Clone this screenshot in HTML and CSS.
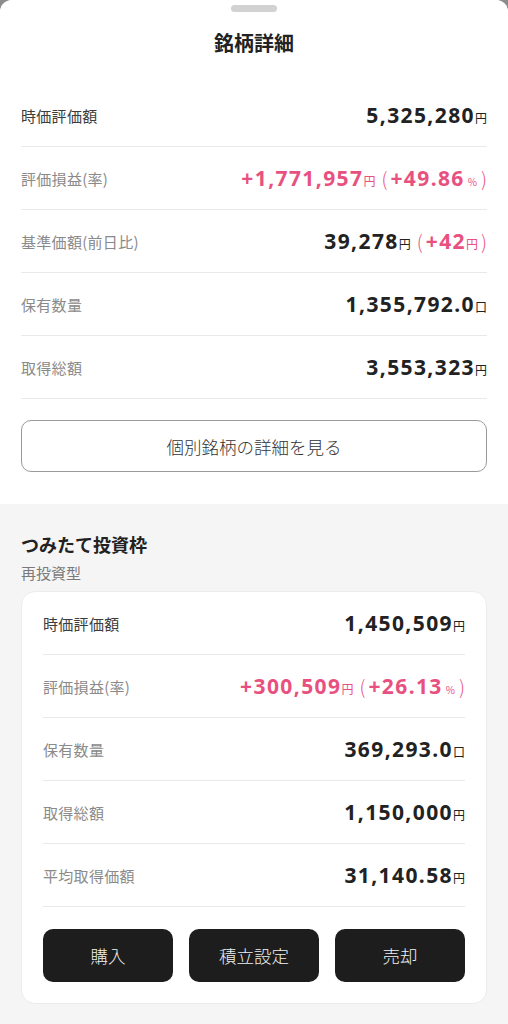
FILE: index.html
```html
<!DOCTYPE html>
<html lang="ja">
<head>
<meta charset="utf-8">
<link rel="stylesheet" href="styles.css">
</head>
<body>
<div class="sheet">
  <section class="top">
    <div class="handle"></div>
    <h1 class="title">銘柄詳細</h1>
    <div class="rows">
      <div class="row"><span class="label strong">時価評価額</span><span class="val"><b>5,325,280</b><small>円</small></span></div>
      <div class="row"><span class="label">評価損益(率)</span><span class="val pink"><b>+1,771,957</b><small>円</small><span class="par">(</span><b>+49.86</b><small class="pc">%</small><span class="par">)</span></span></div>
      <div class="row"><span class="label">基準価額(前日比)</span><span class="val"><b>39,278</b><small>円</small><span class="pink"><span class="par">(</span><b>+42</b><small>円</small><span class="par">)</span></span></span></div>
      <div class="row"><span class="label">保有数量</span><span class="val"><b>1,355,792.0</b><small>口</small></span></div>
      <div class="row"><span class="label">取得総額</span><span class="val"><b>3,553,323</b><small>円</small></span></div>
    </div>
    <button class="outline">個別銘柄の詳細を見る</button>
  </section>
  <section class="gray">
    <h2 class="sec-title">つみたて投資枠</h2>
    <p class="sec-sub">再投資型</p>
    <div class="card">
      <div class="rows">
        <div class="row"><span class="label strong">時価評価額</span><span class="val"><b>1,450,509</b><small>円</small></span></div>
        <div class="row"><span class="label">評価損益(率)</span><span class="val pink"><b>+300,509</b><small>円</small><span class="par">(</span><b>+26.13</b><small class="pc">%</small><span class="par">)</span></span></div>
        <div class="row"><span class="label">保有数量</span><span class="val"><b>369,293.0</b><small>口</small></span></div>
        <div class="row"><span class="label">取得総額</span><span class="val"><b>1,150,000</b><small>円</small></span></div>
        <div class="row"><span class="label">平均取得価額</span><span class="val"><b>31,140.58</b><small>円</small></span></div>
      </div>
      <div class="actions">
        <button class="dark">購入</button>
        <button class="dark">積立設定</button>
        <button class="dark">売却</button>
      </div>
    </div>
  </section>
</div>
</body>
</html>
```

FILE: styles.css
```css
* { box-sizing: border-box; }
html, body { margin: 0; padding: 0; }
html { background: #8c8c8c; }
body {
  width: 508px;
  height: 1024px;
  overflow: hidden;
  font-family: "Noto Sans CJK JP", "Noto Sans", sans-serif;
  color: #222;
}
.sheet {
  background: #f5f5f5;
  border-radius: 12px 12px 0 0;
  overflow: hidden;
  height: 1024px;
}
.top {
  background: #fff;
  padding: 5px 21px 32px;
  display: flex;
  flex-direction: column;
}
.handle {
  width: 46px;
  height: 7px;
  border-radius: 4px;
  background: #d2d2d2;
  align-self: center;
}
.title {
  margin: 17px 0 0;
  font-size: 20px;
  line-height: 28px;
  font-weight: 700;
  text-align: center;
  color: #222;
}
.top .rows { margin-top: 27px; }
.row {
  height: 63px;
  border-bottom: 1px solid #e9e9e9;
  display: flex;
  align-items: center;
  justify-content: space-between;
}
.label {
  font-size: 15px;
  font-weight: 400;
  color: #8a8a8a;
  letter-spacing: 0.3px;
}
.label.strong { color: #3c3c3c; font-weight: 400; }
.val {
  display: flex;
  align-items: baseline;
  color: #222;
}
.val b {
  font-family: "Noto Sans", "Noto Sans CJK JP", sans-serif;
  font-size: 21px;
  font-weight: 700;
  letter-spacing: 1.4px;
}
.val small {
  font-size: 12px;
  margin-left: 0;
}
.val small.pc { font-size: 10px; margin-left: 3px; }
.par {
  font-size: 19px;
  font-weight: 300;
  margin: 0 3px 0 6px;
}
.pc + .par { margin: 0 0 0 4px; }
.val .pink > .par:last-child { margin: 0 0 0 3px; }
.pink { color: #e8517f; display: inline-flex; align-items: baseline; }
.outline {
  margin-top: 21px;
  height: 52px;
  border: 1px solid #9a9a9a;
  border-radius: 10px;
  background: #fff;
  font-family: "Noto Sans CJK JP", sans-serif;
  font-size: 17.5px;
  font-weight: 300;
  color: #333;
}
.gray {
  padding: 27px 21px 0;
}
.sec-title {
  margin: 0;
  font-size: 18px;
  line-height: 26px;
  font-weight: 700;
  color: #222;
}
.sec-sub {
  margin: 5px 0 0;
  font-size: 15px;
  line-height: 22px;
  color: #7a7a7a;
}
.card {
  margin-top: 7px;
  background: #fff;
  border-radius: 14px;
  border: 1px solid #ececec;
  padding: 0 21px 21px;
}
.actions {
  margin-top: 22px;
  display: grid;
  grid-template-columns: repeat(3, 1fr);
  gap: 16px;
}
.dark {
  height: 53px;
  border: none;
  border-radius: 10px;
  background: #1d1d1d;
  color: #f0f0f0;
  font-family: "Noto Sans CJK JP", sans-serif;
  font-size: 17.5px;
  font-weight: 300;
}
```
